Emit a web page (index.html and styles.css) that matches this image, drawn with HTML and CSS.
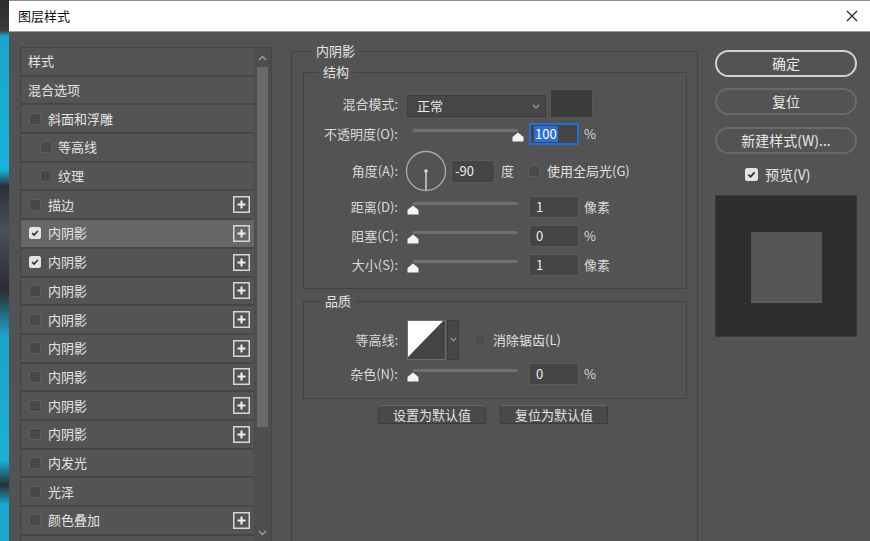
FILE: index.html
```html
<!DOCTYPE html>
<html lang="zh-CN">
<head>
<meta charset="utf-8">
<title>图层样式</title>
<link rel="stylesheet" href="styles.css">
</head>
<body>
<div class="screen">
  <div class="backdrop"></div>
  <div class="dialog">
    <header class="titlebar">
      <span class="title">图层样式</span>
      <svg class="close" viewBox="0 0 12 12" width="12" height="12"><path d="M1 1L11 11M11 1L1 11" stroke="#222" stroke-width="1.2" fill="none"/></svg>
    </header>
    <div class="dialog-body">
      <aside class="styles-list">
        <div class="rows">
          <div class="row plain">样式</div>
          <div class="row plain">混合选项</div>
          <div class="row"><span class="cb"></span><span>斜面和浮雕</span></div>
          <div class="row sub"><span class="cb"></span><span>等高线</span></div>
          <div class="row sub"><span class="cb"></span><span>纹理</span></div>
          <div class="row"><span class="cb"></span><span>描边</span><svg class="plus" viewBox="0 0 17 17" width="17" height="17"><rect x="0.75" y="0.75" width="15.5" height="15.5" fill="none" stroke="#d8d8d8" stroke-width="1.5"/><path d="M4.5 8.5H12.5M8.5 4.5V12.5" stroke="#f2f2f2" stroke-width="2"/></svg></div>
          <div class="row selected"><span class="cb on"><svg viewBox="0 0 12 12" width="12" height="12"><path d="M2.6 6.2L5 8.5L9.4 3.6" stroke="#333" stroke-width="2" fill="none"/></svg></span><span>内阴影</span><svg class="plus" viewBox="0 0 17 17" width="17" height="17"><rect x="0.75" y="0.75" width="15.5" height="15.5" fill="none" stroke="#d8d8d8" stroke-width="1.5"/><path d="M4.5 8.5H12.5M8.5 4.5V12.5" stroke="#f2f2f2" stroke-width="2"/></svg></div>
          <div class="row"><span class="cb on"><svg viewBox="0 0 12 12" width="12" height="12"><path d="M2.6 6.2L5 8.5L9.4 3.6" stroke="#333" stroke-width="2" fill="none"/></svg></span><span>内阴影</span><svg class="plus" viewBox="0 0 17 17" width="17" height="17"><rect x="0.75" y="0.75" width="15.5" height="15.5" fill="none" stroke="#d8d8d8" stroke-width="1.5"/><path d="M4.5 8.5H12.5M8.5 4.5V12.5" stroke="#f2f2f2" stroke-width="2"/></svg></div>
          <div class="row"><span class="cb"></span><span>内阴影</span><svg class="plus" viewBox="0 0 17 17" width="17" height="17"><rect x="0.75" y="0.75" width="15.5" height="15.5" fill="none" stroke="#d8d8d8" stroke-width="1.5"/><path d="M4.5 8.5H12.5M8.5 4.5V12.5" stroke="#f2f2f2" stroke-width="2"/></svg></div>
          <div class="row"><span class="cb"></span><span>内阴影</span><svg class="plus" viewBox="0 0 17 17" width="17" height="17"><rect x="0.75" y="0.75" width="15.5" height="15.5" fill="none" stroke="#d8d8d8" stroke-width="1.5"/><path d="M4.5 8.5H12.5M8.5 4.5V12.5" stroke="#f2f2f2" stroke-width="2"/></svg></div>
          <div class="row"><span class="cb"></span><span>内阴影</span><svg class="plus" viewBox="0 0 17 17" width="17" height="17"><rect x="0.75" y="0.75" width="15.5" height="15.5" fill="none" stroke="#d8d8d8" stroke-width="1.5"/><path d="M4.5 8.5H12.5M8.5 4.5V12.5" stroke="#f2f2f2" stroke-width="2"/></svg></div>
          <div class="row"><span class="cb"></span><span>内阴影</span><svg class="plus" viewBox="0 0 17 17" width="17" height="17"><rect x="0.75" y="0.75" width="15.5" height="15.5" fill="none" stroke="#d8d8d8" stroke-width="1.5"/><path d="M4.5 8.5H12.5M8.5 4.5V12.5" stroke="#f2f2f2" stroke-width="2"/></svg></div>
          <div class="row"><span class="cb"></span><span>内阴影</span><svg class="plus" viewBox="0 0 17 17" width="17" height="17"><rect x="0.75" y="0.75" width="15.5" height="15.5" fill="none" stroke="#d8d8d8" stroke-width="1.5"/><path d="M4.5 8.5H12.5M8.5 4.5V12.5" stroke="#f2f2f2" stroke-width="2"/></svg></div>
          <div class="row"><span class="cb"></span><span>内阴影</span><svg class="plus" viewBox="0 0 17 17" width="17" height="17"><rect x="0.75" y="0.75" width="15.5" height="15.5" fill="none" stroke="#d8d8d8" stroke-width="1.5"/><path d="M4.5 8.5H12.5M8.5 4.5V12.5" stroke="#f2f2f2" stroke-width="2"/></svg></div>
          <div class="row"><span class="cb"></span><span>内发光</span></div>
          <div class="row"><span class="cb"></span><span>光泽</span></div>
          <div class="row"><span class="cb"></span><span>颜色叠加</span><svg class="plus" viewBox="0 0 17 17" width="17" height="17"><rect x="0.75" y="0.75" width="15.5" height="15.5" fill="none" stroke="#d8d8d8" stroke-width="1.5"/><path d="M4.5 8.5H12.5M8.5 4.5V12.5" stroke="#f2f2f2" stroke-width="2"/></svg></div>
          <div class="row blank"></div>
        </div>
        <div class="scrollbar">
          <div class="sb-arrow"><svg viewBox="0 0 9 6" width="9" height="6"><path d="M1 5L4.5 1.5L8 5" stroke="#a0a0a0" stroke-width="1.3" fill="none"/></svg></div>
          <div class="sb-thumb"></div>
          <div class="sb-track"></div>
          <div class="sb-arrow"><svg viewBox="0 0 9 6" width="9" height="6"><path d="M1 1L4.5 4.5L8 1" stroke="#a0a0a0" stroke-width="1.3" fill="none"/></svg></div>
        </div>
      </aside>

      <main class="settings">
        <fieldset class="group outer">
          <legend>内阴影</legend>
          <fieldset class="group inner">
            <legend>结构</legend>
            <div class="field h-blend">
              <span class="label">混合模式:</span>
              <div class="select"><span>正常</span><svg viewBox="0 0 8 5" width="8" height="5"><path d="M1 1L4 4L7 1" stroke="#a5a5a5" stroke-width="1.2" fill="none"/></svg></div>
              <div class="swatch"></div>
            </div>
            <div class="field h-opacity">
              <span class="label">不透明度(O):</span>
              <div class="slider"><div class="track"></div><svg class="thumb" style="left: calc(100% - 6px)" viewBox="0 0 12 10" width="12" height="10"><path d="M6 0.5L11.5 5V9.5H0.5V5Z" fill="#f4f4f4"/></svg></div>
              <div class="num focus"><span class="sel">100</span></div>
              <span class="unit">%</span>
            </div>
            <div class="field h-angle">
              <span class="label">角度(A):</span>
              <svg class="dial" viewBox="0 0 42 42" width="42" height="42"><circle cx="21" cy="21" r="19.5" fill="none" stroke="#a9a9a9" stroke-width="1.3"/><path d="M21 21V40" stroke="#cfcfcf" stroke-width="1.5"/><circle cx="21" cy="21" r="1.8" fill="#d8d8d8"/></svg>
              <div class="num angle">-90</div>
              <span class="deg">度</span>
              <span class="cb ml"></span>
              <span class="cb-label">使用全局光(G)</span>
            </div>
            <div class="field h-dist">
              <span class="label">距离(D):</span>
              <div class="slider"><div class="track"></div><svg class="thumb" style="left: calc(0% - 6px)" viewBox="0 0 12 10" width="12" height="10"><path d="M6 0.5L11.5 5V9.5H0.5V5Z" fill="#f4f4f4"/></svg></div>
              <div class="num">1</div>
              <span class="unit">像素</span>
            </div>
            <div class="field h-choke">
              <span class="label">阻塞(C):</span>
              <div class="slider"><div class="track"></div><svg class="thumb" style="left: calc(0% - 6px)" viewBox="0 0 12 10" width="12" height="10"><path d="M6 0.5L11.5 5V9.5H0.5V5Z" fill="#f4f4f4"/></svg></div>
              <div class="num">0</div>
              <span class="unit">%</span>
            </div>
            <div class="field h-size">
              <span class="label">大小(S):</span>
              <div class="slider"><div class="track"></div><svg class="thumb" style="left: calc(0% - 6px)" viewBox="0 0 12 10" width="12" height="10"><path d="M6 0.5L11.5 5V9.5H0.5V5Z" fill="#f4f4f4"/></svg></div>
              <div class="num">1</div>
              <span class="unit">像素</span>
            </div>
          </fieldset>

          <fieldset class="group inner quality">
            <legend>品质</legend>
            <div class="field h-contour">
              <span class="label">等高线:</span>
              <div class="contour"><svg viewBox="0 0 37 38" width="37" height="38" preserveAspectRatio="none"><rect width="37" height="38" fill="#444"/><path d="M0 0H35L0 36Z" fill="#ffffff"/></svg></div>
              <div class="contour-btn"><svg viewBox="0 0 8 5" width="7" height="5"><path d="M1 1L4 4L7 1" stroke="#a5a5a5" stroke-width="1.2" fill="none"/></svg></div>
              <span class="cb ml2 dim"></span>
              <span class="cb-label">消除锯齿(L)</span>
            </div>
            <div class="field h-noise">
              <span class="label">杂色(N):</span>
              <div class="slider"><div class="track"></div><svg class="thumb" style="left: calc(0% - 6px)" viewBox="0 0 12 10" width="12" height="10"><path d="M6 0.5L11.5 5V9.5H0.5V5Z" fill="#f4f4f4"/></svg></div>
              <div class="num">0</div>
              <span class="unit">%</span>
            </div>
          </fieldset>

          <div class="defaults">
            <button class="btn-flat" type="button">设置为默认值</button>
            <button class="btn-flat" type="button">复位为默认值</button>
          </div>
        </fieldset>
      </main>

      <aside class="actions">
        <button class="pill primary" type="button">确定</button>
        <button class="pill gap1" type="button">复位</button>
        <button class="pill gap2" type="button">新建样式(W)...</button>
        <label class="preview-check"><span class="cb on big"><svg viewBox="0 0 12 12" width="13" height="13"><path d="M2.6 6.2L5 8.5L9.4 3.6" stroke="#333" stroke-width="2" fill="none"/></svg></span><span>预览(V)</span></label>
        <div class="preview"><div class="preview-square"></div></div>
      </aside>
    </div>
  </div>
</div>
</body>
</html>
```

FILE: styles.css
```css
* { box-sizing: border-box; }

html, body { margin: 0; padding: 0; }

body {
  width: 870px;
  height: 541px;
  overflow: hidden;
  background: #535353;
  font-family: "Noto Sans CJK SC", "Noto Sans", sans-serif;
  font-size: 13px;
  color: #e2e2e2;
}

.screen { display: flex; height: 541px; }

.backdrop {
  width: 9px;
  flex: none;
  background: linear-gradient(to bottom,
    #2e2e2e 0, #3a3a3a 30px, #1aa5cf 36px, #17b3da 170px,
    #2b3034 186px, #4a5157 230px, #2a2d31 290px, #1fa2c8 336px,
    #1ab0d8 460px, #263036 485px, #19a8d2 505px, #19a8d2 100%);
}

.dialog {
  flex: 1;
  min-width: 0;
  display: flex;
  flex-direction: column;
  background: #535353;
}

.titlebar {
  height: 32px;
  flex: none;
  background: #ffffff;
  border-top: 1px solid #8c8c8c;
  border-bottom: 1px solid #9c9c9c;
  display: flex;
  align-items: center;
  justify-content: space-between;
  padding: 0 12px 0 9px;
}
.title { color: #111; font-size: 13px; line-height: 16px; }
.close { display: block; }

.dialog-body {
  flex: 1;
  min-height: 0;
  display: flex;
  align-items: flex-start;
  padding: 10px 0 0 11px;
}

/* ---------- left list ---------- */
.styles-list {
  width: 252px;
  height: 496px;
  margin-top: 5px;
  flex: none;
  display: flex;
  border: 1px solid #454545;
  background: #464646;
}
.rows {
  width: 233px;
  flex: none;
  display: flex;
  flex-direction: column;
  gap: 2px;
  overflow: hidden;
}
.row {
  height: 26.7px;
  flex: none;
  background: #545454;
  display: flex;
  align-items: center;
  padding-left: 8px;
  line-height: 16px;
  color: #e4e4e4;
}
.row.plain { padding-left: 7px; }
.row.sub { padding-left: 19px; }
.row.selected { background: #676767; }
.row .cb { margin-right: 7px; }
.row.sub .cb { margin-right: 6px; }
.row .plus { margin-left: auto; margin-right: 4px; display: block; }

.cb {
  width: 12px;
  height: 12px;
  flex: none;
  border-radius: 2px;
  background: #484848;
  border: 1px solid #5e5e5e;
  display: inline-flex;
  align-items: center;
  justify-content: center;
}
.cb.on { background: #e3e3e3; border-color: #e3e3e3; }
.cb svg { display: block; }
.cb.big { width: 13px; height: 13px; }
.cb.dim { background: #4d4d4d; border-color: #5a5a5a; }

.scrollbar {
  width: 17px;
  flex: none;
  display: flex;
  flex-direction: column;
  align-items: center;
  background: #4e4e4e;
}
.sb-arrow {
  height: 19px;
  width: 100%;
  flex: none;
  display: flex;
  align-items: center;
  justify-content: center;
}
.sb-thumb { width: 11px; height: 360px; flex: none; background: #6a6a6a; }
.sb-track { flex: 1; }

/* ---------- middle ---------- */
.settings { width: 407px; margin-left: 19px; flex: none; }

.group {
  margin: 0;
  border: 1px solid #434343;
  min-inline-size: 0;
}
legend {
  padding: 0 4px;
  line-height: 18px;
  font-size: 13px;
  color: #e4e4e4;
}
.outer { padding: 3px 10px 0 11px; height: 530px; }
.outer > legend { margin-left: 9px; }
.inner { padding: 8px 0 8px 0; }
.inner > legend { margin-left: 15px; }
.quality { margin-top: 3px; padding: 10px 0 9px 0; }
.quality > legend { margin-left: 17px; }

.field { display: flex; align-items: center; }
.field .label {
  width: 94px;
  flex: none;
  margin-right: 9px;
  text-align: right;
  line-height: 16px;
  color: #d9d9d9;
  white-space: nowrap;
}
.h-blend { height: 29px; align-items: flex-start; }
.h-blend .label { margin-top: 7px; }
.h-opacity { height: 32px; }
.h-angle { height: 42px; }
.h-dist { height: 30px; }
.h-choke { height: 28px; }
.h-size { height: 30px; }
.h-contour { height: 39px; }
.h-noise { height: 30px; }

.select {
  width: 139px;
  height: 22px;
  margin-top: 6px;
  flex: none;
  background: #464646;
  border: 1px solid #3d3d3d;
  display: flex;
  align-items: center;
  justify-content: space-between;
  padding: 0 5px 0 9px;
  color: #e8e8e8;
  line-height: 16px;
}
.select svg { display: block; }
.swatch {
  width: 43px;
  height: 29px;
  margin-left: 4px;
  flex: none;
  background: #3b3b3b;
  border: 1px solid #585858;
}

.slider {
  position: relative;
  width: 105px;
  height: 18px;
  margin-left: 6px;
  flex: none;
}
.slider .track {
  margin-top: 4px;
  height: 3px;
  border-radius: 2px;
  background: #707070;
}
.slider .thumb { position: absolute; top: 7px; display: block; }

.num {
  width: 50px;
  height: 22px;
  margin-left: 11px;
  flex: none;
  background: #454545;
  border: 1px solid #5b5b5b;
  padding: 0 6px;
  display: flex;
  align-items: center;
  color: #ececec;
  line-height: 16px;
}
.num.focus { border: 2px solid #1d6fde; padding-left: 3px; }
.num.focus .sel { background: #2b6fd4; color: #fff; padding: 0 1px; line-height: 16px; }
.num.angle { width: 44px; height: 23px; margin-left: 4px; padding-left: 3px; }

.unit { margin-left: 5px; color: #d9d9d9; line-height: 16px; }
.dial { margin-left: -2px; display: block; flex: none; }
.deg { margin-left: 6px; color: #d9d9d9; line-height: 16px; }
.cb.ml { margin-left: 14px; }
.cb.ml2 { margin-left: 15px; }
.cb-label { margin-left: 7px; color: #e0e0e0; line-height: 16px; white-space: nowrap; }

.contour {
  width: 39px;
  height: 40px;
  flex: none;
  border: 1px solid #6c6c6c;
  background: #444;
}
.contour svg { display: block; }
.contour-btn {
  width: 12px;
  height: 40px;
  margin-left: 1px;
  flex: none;
  background: #474747;
  border: 1px solid #3d3d3d;
  display: flex;
  align-items: center;
  justify-content: center;
}
.contour-btn svg { display: block; }

.defaults { display: flex; gap: 14px; margin: 6px 0 0 75px; }
.btn-flat {
  width: 108px;
  height: 19px;
  padding: 0;
  background: #4a4a4a;
  border: 1px solid #3c3c3c;
  border-top-color: #656565;
  color: #e2e2e2;
  font-family: inherit;
  font-size: 13px;
  line-height: 16px;
  text-align: center;
}

/* ---------- right ---------- */
.actions {
  width: 142px;
  margin-left: 17px;
  margin-top: 8px;
  flex: none;
  display: flex;
  flex-direction: column;
}
.pill {
  height: 27px;
  padding: 0;
  background: transparent;
  border: 2px solid #6a6a6a;
  border-radius: 14px;
  color: #e8e8e8;
  font-family: inherit;
  font-size: 14px;
  line-height: 21px;
  text-align: center;
}
.pill.primary { border-color: #d2d2d2; }
.pill.gap1 { margin-top: 11px; }
.pill.gap2 { margin-top: 12px; }

.preview-check {
  display: flex;
  align-items: center;
  gap: 7px;
  margin: 13px 0 0 30px;
  height: 14px;
  font-size: 14px;
  line-height: 16px;
  color: #e6e6e6;
}

.preview {
  width: 142px;
  height: 142px;
  margin-top: 14px;
  background: #2e2e2e;
  border: 1px solid #3a3a3a;
  display: flex;
  align-items: center;
  justify-content: center;
}
.preview-square {
  width: 71px;
  height: 71px;
  margin-top: 3px;
  background: #555555;
  box-shadow: inset 0 -2px 0 #5c5c5c;
}
```
